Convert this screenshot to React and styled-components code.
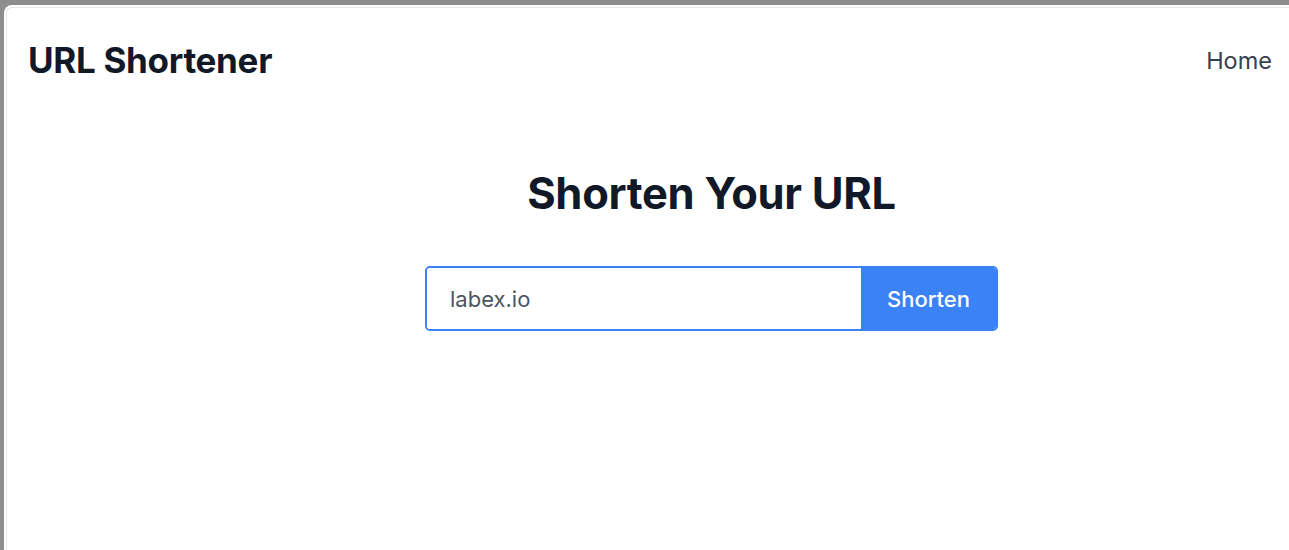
import React from 'react';
import styled, { createGlobalStyle } from 'styled-components';

const GlobalStyle = createGlobalStyle`
    html, body {
        margin: 0;
        padding: 0;
        background: #8d8d8d;
        font-family: Inter, "Noto Sans", sans-serif;
        overflow: hidden;
    }
`;

const Screen = styled.div`
    height: 550px;
    padding: 5px 0 0 4px;
    box-sizing: border-box;
`;

const Window = styled.div`
    height: 100%;
    background: #ffffff;
    border-top-left-radius: 8px;
    padding: 2px 0 0 2px;
    box-sizing: border-box;
`;

const Frame = styled.div`
    height: 100%;
    border-top: 1px solid #e6e6e6;
    border-left: 1px solid #e6e6e6;
    border-top-left-radius: 6px;
    box-sizing: border-box;
`;

const Header = styled.header`
    display: flex;
    justify-content: space-between;
    align-items: center;
    padding: 31px 17px 0 21px;
`;

const Brand = styled.h1`
    margin: 0;
    font-size: 35px;
    font-weight: 700;
    color: #111827;
    letter-spacing: -0.3px;
`;

const NavLink = styled.a`
    font-size: 23.5px;
    color: #374151;
    text-decoration: none;
`;

const Main = styled.main`
    display: flex;
    flex-direction: column;
    align-items: center;
    padding: 86px 0 0 127px;
`;

const Title = styled.h2`
    margin: 0 0 47px;
    font-size: 43.5px;
    font-weight: 700;
    color: #111827;
    letter-spacing: -0.3px;
`;

const Form = styled.form`
    display: flex;
    width: 573px;
    height: 65px;
    border: 2.5px solid #3b82f6;
    border-radius: 5px;
    box-sizing: border-box;
    overflow: hidden;
`;

const Input = styled.input`
    flex: 1;
    border: none;
    outline: none;
    padding: 0 0 0 23px;
    font-family: inherit;
    font-size: 22px;
    color: #4b5563;
    background: #ffffff;
`;

const Button = styled.button`
    width: 135px;
    border: none;
    background: #3b82f6;
    color: #ffffff;
    font-family: inherit;
    font-size: 22px;
    font-weight: 500;
    cursor: pointer;
`;

const App = () => {
    return (
        <Screen>
            <GlobalStyle />
            <Window>
                <Frame>
                    <Header>
                        <Brand>URL Shortener</Brand>
                        <NavLink href="#">Home</NavLink>
                    </Header>
                    <Main>
                        <Title>Shorten Your URL</Title>
                        <Form onSubmit={(e) => e.preventDefault()}>
                            <Input defaultValue="labex.io" />
                            <Button type="submit">Shorten</Button>
                        </Form>
                    </Main>
                </Frame>
            </Window>
        </Screen>
    );
};

export default App;
